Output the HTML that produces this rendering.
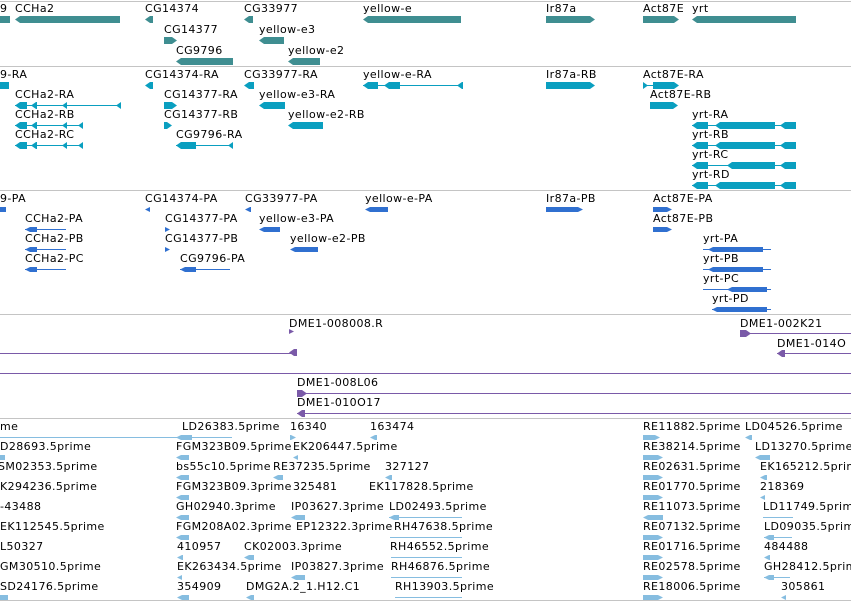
<!DOCTYPE html>
<html><head><meta charset="utf-8"><style>
body{margin:0;width:851px;height:602px;background:#fff;position:relative;overflow:hidden;font-family:"DejaVu Sans","Liberation Sans",sans-serif}
.t{position:absolute;font-size:11px;line-height:12px;letter-spacing:.4px;color:#000;white-space:nowrap}
.b{position:absolute;height:7px}
.L{clip-path:polygon(0 50%,5px 0,100% 0,100% 100%,5px 100%)}
.R{clip-path:polygon(0 0,calc(100% - 5px) 0,100% 50%,calc(100% - 5px) 100%,0 100%)}
.ln{position:absolute;height:1px}
.sep{position:absolute;left:0;width:851px;height:1px;background:#c4c4c4}
.g{background:#3f8e91}.c{background:#0a9fc0}.p{background:#3070d0}.v{background:#7a5aa8}.e{background:#86bde0}
.s{height:5px}
</style></head><body>
<div class="sep" style="top:1px"></div>
<div class="sep" style="top:66px"></div>
<div class="sep" style="top:190px"></div>
<div class="sep" style="top:314px"></div>
<div class="sep" style="top:418px"></div>
<div class="sep" style="top:600px"></div>

<!-- genes -->
<div class="t" style="left:0;top:3px">9</div><div class="b g" style="left:0;top:16px;width:10px"></div>
<div class="t" style="left:15px;top:3px">CCHa2</div><div class="b g L" style="left:15px;top:16px;width:105px"></div>
<div class="t" style="left:145px;top:3px">CG14374</div><div class="b g L" style="left:145px;top:16px;width:8px"></div>
<div class="t" style="left:244px;top:3px">CG33977</div><div class="b g L" style="left:244px;top:16px;width:9px"></div>
<div class="t" style="left:363px;top:3px">yellow-e</div><div class="b g L" style="left:363px;top:16px;width:98px"></div>
<div class="t" style="left:546px;top:3px">Ir87a</div><div class="b g R" style="left:546px;top:16px;width:49px"></div>
<div class="t" style="left:643px;top:3px">Act87E</div><div class="b g R" style="left:643px;top:16px;width:36px"></div>
<div class="t" style="left:692px;top:3px">yrt</div><div class="b g L" style="left:692px;top:16px;width:104px"></div>
<div class="t" style="left:164px;top:24px">CG14377</div><div class="b g R" style="left:164px;top:37px;width:13px"></div>
<div class="t" style="left:259px;top:24px">yellow-e3</div><div class="b g L" style="left:259px;top:37px;width:25px"></div>
<div class="t" style="left:176px;top:45px">CG9796</div><div class="b g L" style="left:176px;top:58px;width:57px"></div>
<div class="t" style="left:288px;top:45px">yellow-e2</div><div class="b g L" style="left:288px;top:58px;width:32px"></div>

<!-- transcripts -->
<div class="t" style="left:0;top:69px">9-RA</div><div class="b c" style="left:0;top:82px;width:9px"></div>
<div class="t" style="left:145px;top:69px">CG14374-RA</div><div class="b c L" style="left:145px;top:82px;width:8px"></div>
<div class="t" style="left:244px;top:69px">CG33977-RA</div><div class="b c L" style="left:244px;top:82px;width:10px"></div>
<div class="t" style="left:363px;top:69px">yellow-e-RA</div><div class="ln c" style="left:363px;top:85px;width:100px"></div><div class="b c L" style="left:363px;top:82px;width:15px"></div><div class="b c L" style="left:384px;top:82px;width:16px"></div><div class="b c L" style="left:457px;top:82px;width:6px"></div>
<div class="t" style="left:546px;top:69px">Ir87a-RB</div><div class="b c R" style="left:546px;top:82px;width:49px"></div>
<div class="t" style="left:643px;top:69px">Act87E-RA</div><div class="ln c" style="left:643px;top:85px;width:12px"></div><div class="b c R" style="left:643px;top:82px;width:5px"></div><div class="b c R" style="left:653px;top:82px;width:26px"></div>
<div class="t" style="left:15px;top:89px">CCHa2-RA</div><div class="ln c" style="left:15px;top:105px;width:106px"></div><div class="b c L" style="left:15px;top:102px;width:12px"></div><div class="b c L" style="left:31px;top:102px;width:6px"></div><div class="b c L" style="left:62px;top:102px;width:5px"></div><div class="b c L" style="left:116px;top:102px;width:5px"></div>
<div class="t" style="left:164px;top:89px">CG14377-RA</div><div class="b c R" style="left:164px;top:102px;width:13px"></div>
<div class="t" style="left:259px;top:89px">yellow-e3-RA</div><div class="b c L" style="left:259px;top:102px;width:26px"></div>
<div class="t" style="left:650px;top:89px">Act87E-RB</div><div class="b c R" style="left:650px;top:102px;width:28px"></div>
<div class="t" style="left:15px;top:109px">CCHa2-RB</div><div class="ln c" style="left:15px;top:125px;width:68px"></div><div class="b c L" style="left:15px;top:122px;width:12px"></div><div class="b c L" style="left:31px;top:122px;width:6px"></div><div class="b c L" style="left:62px;top:122px;width:5px"></div><div class="b c L" style="left:78px;top:122px;width:5px"></div>
<div class="t" style="left:164px;top:109px">CG14377-RB</div><div class="b c R" style="left:164px;top:122px;width:8px"></div>
<div class="t" style="left:288px;top:109px">yellow-e2-RB</div><div class="b c L" style="left:288px;top:122px;width:35px"></div>
<div class="t" style="left:15px;top:129px">CCHa2-RC</div><div class="ln c" style="left:15px;top:145px;width:68px"></div><div class="b c L" style="left:15px;top:142px;width:12px"></div><div class="b c L" style="left:31px;top:142px;width:6px"></div><div class="b c L" style="left:62px;top:142px;width:5px"></div><div class="b c L" style="left:78px;top:142px;width:5px"></div>
<div class="t" style="left:176px;top:129px">CG9796-RA</div><div class="ln c" style="left:176px;top:145px;width:57px"></div><div class="b c L" style="left:176px;top:142px;width:20px"></div><div class="b c L" style="left:228px;top:142px;width:5px"></div>
<div class="t" style="left:692px;top:109px">yrt-RA</div><div class="ln c" style="left:692px;top:125px;width:104px"></div><div class="b c L" style="left:692px;top:122px;width:16px"></div><div class="b c L" style="left:715px;top:122px;width:60px"></div><div class="b c L" style="left:780px;top:122px;width:16px"></div>
<div class="t" style="left:692px;top:129px">yrt-RB</div><div class="ln c" style="left:692px;top:145px;width:104px"></div><div class="b c L" style="left:692px;top:142px;width:16px"></div><div class="b c L" style="left:715px;top:142px;width:60px"></div><div class="b c L" style="left:780px;top:142px;width:16px"></div>
<div class="t" style="left:692px;top:149px">yrt-RC</div><div class="ln c" style="left:692px;top:165px;width:104px"></div><div class="b c L" style="left:692px;top:162px;width:16px"></div><div class="b c L" style="left:727px;top:162px;width:48px"></div><div class="b c L" style="left:780px;top:162px;width:16px"></div>
<div class="t" style="left:692px;top:169px">yrt-RD</div><div class="ln c" style="left:692px;top:185px;width:104px"></div><div class="b c L" style="left:692px;top:182px;width:16px"></div><div class="b c L" style="left:715px;top:182px;width:60px"></div><div class="b c L" style="left:780px;top:182px;width:16px"></div>

<!-- proteins -->
<div class="t" style="left:0;top:193px">9-PA</div><div class="b p s" style="left:0;top:207px;width:6px"></div>
<div class="t" style="left:145px;top:193px">CG14374-PA</div><div class="b p s L" style="left:145px;top:207px;width:5px"></div>
<div class="t" style="left:245px;top:193px">CG33977-PA</div><div class="b p s L" style="left:245px;top:207px;width:6px"></div>
<div class="t" style="left:365px;top:193px">yellow-e-PA</div><div class="b p s L" style="left:365px;top:207px;width:23px"></div>
<div class="t" style="left:546px;top:193px">Ir87a-PB</div><div class="b p s R" style="left:546px;top:207px;width:37px"></div>
<div class="t" style="left:653px;top:193px">Act87E-PA</div><div class="b p s R" style="left:653px;top:207px;width:19px"></div>
<div class="t" style="left:25px;top:213px">CCHa2-PA</div><div class="ln p" style="left:25px;top:229px;width:41px"></div><div class="b p s L" style="left:25px;top:227px;width:12px"></div>
<div class="t" style="left:165px;top:213px">CG14377-PA</div><div class="b p s R" style="left:165px;top:227px;width:5px"></div>
<div class="t" style="left:259px;top:213px">yellow-e3-PA</div><div class="b p s L" style="left:259px;top:227px;width:21px"></div>
<div class="t" style="left:653px;top:213px">Act87E-PB</div><div class="b p s R" style="left:653px;top:227px;width:19px"></div>
<div class="t" style="left:25px;top:233px">CCHa2-PB</div><div class="ln p" style="left:25px;top:249px;width:41px"></div><div class="b p s L" style="left:25px;top:247px;width:12px"></div>
<div class="t" style="left:165px;top:233px">CG14377-PB</div><div class="b p s R" style="left:165px;top:247px;width:5px"></div>
<div class="t" style="left:290px;top:233px">yellow-e2-PB</div><div class="b p s L" style="left:290px;top:247px;width:28px"></div>
<div class="t" style="left:703px;top:233px">yrt-PA</div><div class="ln p" style="left:703px;top:249px;width:68px"></div><div class="b p s L" style="left:708px;top:247px;width:55px"></div>
<div class="t" style="left:25px;top:253px">CCHa2-PC</div><div class="ln p" style="left:25px;top:269px;width:41px"></div><div class="b p s L" style="left:25px;top:267px;width:12px"></div>
<div class="t" style="left:180px;top:253px">CG9796-PA</div><div class="ln p" style="left:180px;top:269px;width:50px"></div><div class="b p s L" style="left:180px;top:267px;width:16px"></div>
<div class="t" style="left:703px;top:253px">yrt-PB</div><div class="ln p" style="left:703px;top:269px;width:68px"></div><div class="b p s L" style="left:708px;top:267px;width:55px"></div>
<div class="t" style="left:703px;top:273px">yrt-PC</div><div class="ln p" style="left:703px;top:289px;width:68px"></div><div class="b p s L" style="left:727px;top:287px;width:40px"></div>
<div class="t" style="left:712px;top:293px">yrt-PD</div><div class="ln p" style="left:712px;top:309px;width:59px"></div><div class="b p s L" style="left:712px;top:307px;width:55px"></div>

<!-- purple -->
<div class="t" style="left:289px;top:318px">DME1-008008.R</div><div class="b v s R" style="left:289px;top:329px;width:5px"></div>
<div class="ln v" style="left:0;top:353px;width:296px"></div><div class="b v L" style="left:289px;top:349px;width:8px"></div>
<div class="t" style="left:740px;top:318px">DME1-002K21</div><div class="ln v" style="left:740px;top:333px;width:111px"></div><div class="b v R" style="left:740px;top:330px;width:11px"></div>
<div class="t" style="left:777px;top:338px">DME1-014O</div><div class="ln v" style="left:777px;top:353px;width:74px"></div><div class="b v L" style="left:777px;top:350px;width:8px"></div>
<div class="ln v" style="left:0;top:373px;width:851px"></div>
<div class="t" style="left:297px;top:377px">DME1-008L06</div><div class="ln v" style="left:297px;top:393px;width:554px"></div><div class="b v R" style="left:297px;top:390px;width:10px"></div>
<div class="t" style="left:297px;top:397px">DME1-010O17</div><div class="ln v" style="left:297px;top:413px;width:554px"></div><div class="b v L" style="left:297px;top:410px;width:8px"></div>

<!-- ESTs -->
<div class="t" style="left:0;top:421px">me</div><div class="t" style="left:182px;top:421px">LD26383.5prime</div><div class="t" style="left:290px;top:421px">16340</div><div class="t" style="left:370px;top:421px">163474</div><div class="t" style="left:643px;top:421px">RE11882.5prime</div><div class="t" style="left:745px;top:421px">LD04526.5prime</div>
<div class="ln e" style="left:0;top:437px;width:232px"></div><div class="b e s L" style="left:176px;top:435px;width:16px"></div><div class="b e s R" style="left:290px;top:435px;width:6px"></div><div class="b e s L" style="left:370px;top:435px;width:7px"></div><div class="b e s R" style="left:643px;top:435px;width:17px"></div><div class="b e s L" style="left:745px;top:435px;width:7px"></div>
<div class="t" style="left:0;top:441px">D28693.5prime</div><div class="t" style="left:176px;top:441px">FGM323B09.5prime</div><div class="t" style="left:293px;top:441px">EK206447.5prime</div><div class="t" style="left:643px;top:441px">RE38214.5prime</div><div class="t" style="left:755px;top:441px">LD13270.5prime</div>
<div class="b e s" style="left:0;top:455px;width:5px"></div><div class="b e s L" style="left:176px;top:455px;width:13px"></div><div class="b e s L" style="left:293px;top:455px;width:5px"></div><div class="b e s R" style="left:643px;top:455px;width:20px"></div><div class="b e s L" style="left:755px;top:455px;width:15px"></div>
<div class="t" style="left:-2px;top:461px">SM02353.5prime</div><div class="t" style="left:176px;top:461px">bs55c10.5prime</div><div class="t" style="left:273px;top:461px">RE37235.5prime</div><div class="t" style="left:385px;top:461px">327127</div><div class="t" style="left:643px;top:461px">RE02631.5prime</div><div class="t" style="left:760px;top:461px">EK165212.5prime</div>
<div class="b e s L" style="left:176px;top:475px;width:13px"></div><div class="b e s L" style="left:273px;top:475px;width:10px"></div><div class="b e s L" style="left:385px;top:475px;width:7px"></div><div class="b e s R" style="left:643px;top:475px;width:20px"></div><div class="b e s L" style="left:760px;top:475px;width:7px"></div>
<div class="t" style="left:0;top:481px">K294236.5prime</div><div class="t" style="left:176px;top:481px">FGM323B09.3prime</div><div class="t" style="left:293px;top:481px">325481</div><div class="t" style="left:369px;top:481px">EK117828.5prime</div><div class="t" style="left:643px;top:481px">RE01770.5prime</div><div class="t" style="left:760px;top:481px">218369</div>
<div class="b e s L" style="left:176px;top:495px;width:13px"></div><div class="b e s R" style="left:643px;top:495px;width:20px"></div><div class="b e s L" style="left:760px;top:495px;width:5px"></div>
<div class="t" style="left:0;top:501px">-43488</div><div class="t" style="left:176px;top:501px">GH02940.3prime</div><div class="t" style="left:291px;top:501px">IP03627.3prime</div><div class="t" style="left:389px;top:501px">LD02493.5prime</div><div class="t" style="left:643px;top:501px">RE11073.5prime</div><div class="t" style="left:763px;top:501px">LD11749.5prime</div>
<div class="b e s L" style="left:176px;top:515px;width:13px"></div><div class="b e s L" style="left:291px;top:515px;width:14px"></div><div class="ln e" style="left:389px;top:517px;width:73px"></div><div class="b e s L" style="left:389px;top:515px;width:10px"></div><div class="ln e" style="left:763px;top:517px;width:30px"></div><div class="b e s L" style="left:643px;top:515px;width:20px"></div>
<div class="t" style="left:0;top:521px">EK112545.5prime</div><div class="t" style="left:176px;top:521px">FGM208A02.3prime</div><div class="t" style="left:296px;top:521px">EP12322.3prime</div><div class="t" style="left:394px;top:521px">RH47638.5prime</div><div class="t" style="left:643px;top:521px">RE07132.5prime</div><div class="t" style="left:764px;top:521px">LD09035.5prime</div>
<div class="b e s L" style="left:176px;top:535px;width:13px"></div><div class="ln e" style="left:390px;top:537px;width:72px"></div><div class="b e s R" style="left:643px;top:535px;width:20px"></div><div class="ln e" style="left:764px;top:537px;width:28px"></div><div class="b e s L" style="left:764px;top:535px;width:10px"></div>
<div class="t" style="left:0;top:541px">L50327</div><div class="t" style="left:177px;top:541px">410957</div><div class="t" style="left:244px;top:541px">CK02003.3prime</div><div class="t" style="left:390px;top:541px">RH46552.5prime</div><div class="t" style="left:643px;top:541px">RE01716.5prime</div><div class="t" style="left:764px;top:541px">484488</div>
<div class="b e s L" style="left:177px;top:555px;width:6px"></div><div class="b e s L" style="left:244px;top:555px;width:10px"></div><div class="ln e" style="left:391px;top:557px;width:71px"></div><div class="b e s R" style="left:643px;top:555px;width:20px"></div><div class="b e s L" style="left:764px;top:555px;width:6px"></div>
<div class="t" style="left:0;top:561px">GM30510.5prime</div><div class="t" style="left:177px;top:561px">EK263434.5prime</div><div class="t" style="left:291px;top:561px">IP03827.3prime</div><div class="t" style="left:391px;top:561px">RH46876.5prime</div><div class="t" style="left:643px;top:561px">RE02578.5prime</div><div class="t" style="left:764px;top:561px">GH28412.5prime</div>
<div class="b e s L" style="left:177px;top:575px;width:5px"></div><div class="b e s L" style="left:291px;top:575px;width:14px"></div><div class="ln e" style="left:391px;top:577px;width:71px"></div><div class="b e s R" style="left:643px;top:575px;width:20px"></div><div class="ln e" style="left:764px;top:577px;width:26px"></div><div class="b e s L" style="left:764px;top:575px;width:10px"></div>
<div class="t" style="left:0;top:581px">SD24176.5prime</div><div class="t" style="left:177px;top:581px">354909</div><div class="t" style="left:246px;top:581px">DMG2A.2_1.H12.C1</div><div class="t" style="left:395px;top:581px">RH13903.5prime</div><div class="t" style="left:643px;top:581px">RE18006.5prime</div><div class="t" style="left:781px;top:581px">305861</div>
<div class="b e s" style="left:0;top:595px;width:8px"></div><div class="b e s L" style="left:177px;top:595px;width:12px"></div><div class="b e s L" style="left:246px;top:595px;width:8px"></div><div class="ln e" style="left:395px;top:597px;width:67px"></div><div class="b e s R" style="left:643px;top:595px;width:20px"></div><div class="b e s L" style="left:781px;top:595px;width:5px"></div>
</body></html>
